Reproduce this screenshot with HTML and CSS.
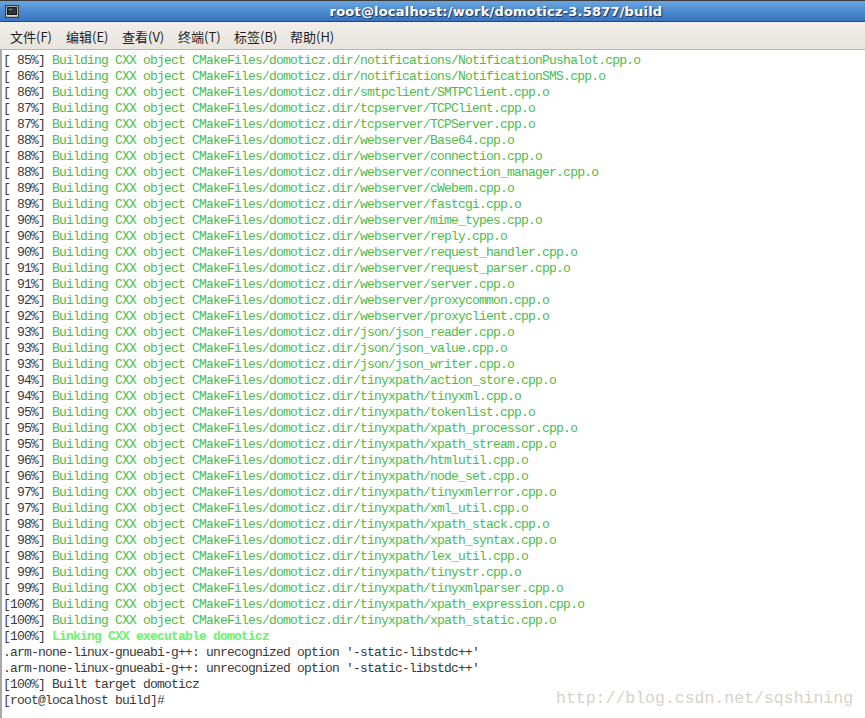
FILE: index.html
```html
<!DOCTYPE html>
<html>
<head>
<meta charset="utf-8">
<link rel="stylesheet" href="styles.css">
</head>
<body>
<div class="window">
  <div class="titlebar">
    <svg class="ticon" width="14" height="13" viewBox="0 0 14 13">
      <rect x="0.5" y="0.5" width="13" height="12" fill="#8a8a86" stroke="#3a3a3a"/>
      <rect x="1.5" y="1.5" width="11" height="10" fill="#d8d8d2"/>
      <rect x="2.5" y="2.5" width="9" height="7" fill="#2e3436" stroke="#1a1a1a"/>
      <rect x="4" y="4" width="3" height="1" fill="#8fa08f"/>
    </svg>
    <div class="title">root@localhost:/work/domoticz-3.5877/build</div>
  </div>
  <div class="menubar">
    <span class="mi">文件(F)</span>
    <span class="mi">编辑(E)</span>
    <span class="mi">查看(V)</span>
    <span class="mi">终端(T)</span>
    <span class="mi">标签(B)</span>
    <span class="mi">帮助(H)</span>
  </div>
  <div class="term">
<pre class="out"><span class="k">[ 85%]</span> <span class="g">Building CXX object CMakeFiles/domoticz.dir/notifications/NotificationPushalot.cpp.o</span>
<span class="k">[ 86%]</span> <span class="g">Building CXX object CMakeFiles/domoticz.dir/notifications/NotificationSMS.cpp.o</span>
<span class="k">[ 86%]</span> <span class="g">Building CXX object CMakeFiles/domoticz.dir/smtpclient/SMTPClient.cpp.o</span>
<span class="k">[ 87%]</span> <span class="g">Building CXX object CMakeFiles/domoticz.dir/tcpserver/TCPClient.cpp.o</span>
<span class="k">[ 87%]</span> <span class="g">Building CXX object CMakeFiles/domoticz.dir/tcpserver/TCPServer.cpp.o</span>
<span class="k">[ 88%]</span> <span class="g">Building CXX object CMakeFiles/domoticz.dir/webserver/Base64.cpp.o</span>
<span class="k">[ 88%]</span> <span class="g">Building CXX object CMakeFiles/domoticz.dir/webserver/connection.cpp.o</span>
<span class="k">[ 88%]</span> <span class="g">Building CXX object CMakeFiles/domoticz.dir/webserver/connection_manager.cpp.o</span>
<span class="k">[ 89%]</span> <span class="g">Building CXX object CMakeFiles/domoticz.dir/webserver/cWebem.cpp.o</span>
<span class="k">[ 89%]</span> <span class="g">Building CXX object CMakeFiles/domoticz.dir/webserver/fastcgi.cpp.o</span>
<span class="k">[ 90%]</span> <span class="g">Building CXX object CMakeFiles/domoticz.dir/webserver/mime_types.cpp.o</span>
<span class="k">[ 90%]</span> <span class="g">Building CXX object CMakeFiles/domoticz.dir/webserver/reply.cpp.o</span>
<span class="k">[ 90%]</span> <span class="g">Building CXX object CMakeFiles/domoticz.dir/webserver/request_handler.cpp.o</span>
<span class="k">[ 91%]</span> <span class="g">Building CXX object CMakeFiles/domoticz.dir/webserver/request_parser.cpp.o</span>
<span class="k">[ 91%]</span> <span class="g">Building CXX object CMakeFiles/domoticz.dir/webserver/server.cpp.o</span>
<span class="k">[ 92%]</span> <span class="g">Building CXX object CMakeFiles/domoticz.dir/webserver/proxycommon.cpp.o</span>
<span class="k">[ 92%]</span> <span class="g">Building CXX object CMakeFiles/domoticz.dir/webserver/proxyclient.cpp.o</span>
<span class="k">[ 93%]</span> <span class="g">Building CXX object CMakeFiles/domoticz.dir/json/json_reader.cpp.o</span>
<span class="k">[ 93%]</span> <span class="g">Building CXX object CMakeFiles/domoticz.dir/json/json_value.cpp.o</span>
<span class="k">[ 93%]</span> <span class="g">Building CXX object CMakeFiles/domoticz.dir/json/json_writer.cpp.o</span>
<span class="k">[ 94%]</span> <span class="g">Building CXX object CMakeFiles/domoticz.dir/tinyxpath/action_store.cpp.o</span>
<span class="k">[ 94%]</span> <span class="g">Building CXX object CMakeFiles/domoticz.dir/tinyxpath/tinyxml.cpp.o</span>
<span class="k">[ 95%]</span> <span class="g">Building CXX object CMakeFiles/domoticz.dir/tinyxpath/tokenlist.cpp.o</span>
<span class="k">[ 95%]</span> <span class="g">Building CXX object CMakeFiles/domoticz.dir/tinyxpath/xpath_processor.cpp.o</span>
<span class="k">[ 95%]</span> <span class="g">Building CXX object CMakeFiles/domoticz.dir/tinyxpath/xpath_stream.cpp.o</span>
<span class="k">[ 96%]</span> <span class="g">Building CXX object CMakeFiles/domoticz.dir/tinyxpath/htmlutil.cpp.o</span>
<span class="k">[ 96%]</span> <span class="g">Building CXX object CMakeFiles/domoticz.dir/tinyxpath/node_set.cpp.o</span>
<span class="k">[ 97%]</span> <span class="g">Building CXX object CMakeFiles/domoticz.dir/tinyxpath/tinyxmlerror.cpp.o</span>
<span class="k">[ 97%]</span> <span class="g">Building CXX object CMakeFiles/domoticz.dir/tinyxpath/xml_util.cpp.o</span>
<span class="k">[ 98%]</span> <span class="g">Building CXX object CMakeFiles/domoticz.dir/tinyxpath/xpath_stack.cpp.o</span>
<span class="k">[ 98%]</span> <span class="g">Building CXX object CMakeFiles/domoticz.dir/tinyxpath/xpath_syntax.cpp.o</span>
<span class="k">[ 98%]</span> <span class="g">Building CXX object CMakeFiles/domoticz.dir/tinyxpath/lex_util.cpp.o</span>
<span class="k">[ 99%]</span> <span class="g">Building CXX object CMakeFiles/domoticz.dir/tinyxpath/tinystr.cpp.o</span>
<span class="k">[ 99%]</span> <span class="g">Building CXX object CMakeFiles/domoticz.dir/tinyxpath/tinyxmlparser.cpp.o</span>
<span class="k">[100%]</span> <span class="g">Building CXX object CMakeFiles/domoticz.dir/tinyxpath/xpath_expression.cpp.o</span>
<span class="k">[100%]</span> <span class="g">Building CXX object CMakeFiles/domoticz.dir/tinyxpath/xpath_static.cpp.o</span>
<span class="k">[100%]</span> <span class="lg">Linking CXX executable domoticz</span>
<span class="k">.arm-none-linux-gnueabi-g++: unrecognized option '-static-libstdc++'</span>
<span class="k">.arm-none-linux-gnueabi-g++: unrecognized option '-static-libstdc++'</span>
<span class="k">[100%] Built target domoticz</span>
<span class="k">[root@localhost build]#</span></pre>
    <div class="wm">http://blog.csdn.net/sqshining</div>
  </div>
</div>
</body>
</html>
```

FILE: styles.css
```css
html, body {
  margin: 0;
  padding: 0;
  background: #ffffff;
}
.window {
  width: 865px;
  height: 718px;
  overflow: hidden;
  display: flex;
  flex-direction: column;
}
.titlebar {
  height: 22px;
  flex: none;
  box-sizing: border-box;
  border-top: 1px solid #3a3a3a;
  border-bottom: 1px solid #24487a;
  background: linear-gradient(#6aa6e0, #4c8ad0 50%, #3a74bc);
  display: flex;
  align-items: center;
  padding-left: 5px;
}
.ticon {
  display: block;
  flex: none;
}
.title {
  flex: 1;
  text-align: center;
  padding-left: 108px;
  font-family: "DejaVu Sans", sans-serif;
  font-weight: bold;
  font-size: 13px;
  color: #ffffff;
  text-shadow: 1px 1px 1px #1c3558;
  letter-spacing: 0.2px;
}
.menubar {
  height: 28px;
  flex: none;
  box-sizing: border-box;
  background: linear-gradient(#f1efeb, #e8e4de);
  border-bottom: 1px solid #bcb5a9;
  display: flex;
  align-items: center;
  gap: 14px;
  padding-left: 10px;
  padding-top: 2px;
}
.mi {
  font-family: "Noto Sans CJK SC", "Noto Sans", sans-serif;
  font-size: 13px;
  color: #1e1e1e;
  width: 42px;
  white-space: nowrap;
}
.term {
  flex: 1;
  position: relative;
  border-left: 2px solid #a8a8a8;
  background: #ffffff;
}
.out {
  margin: 0;
  padding: 3px 0 0 1px;
  font-family: "Liberation Mono", "DejaVu Sans Mono", monospace;
  font-size: 13px;
  letter-spacing: -0.8px;
  line-height: 16px;
  white-space: pre;
}
.k { color: #3a3a3a; }
.g { color: #4cbc4c; }
.lg { color: #6cf26c; font-weight: bold; }
.wm {
  position: absolute;
  left: 554px;
  top: 639px;
  font-family: "Liberation Mono", monospace;
  font-size: 16.5px;
  color: #d6d2ca;
  white-space: nowrap;
}
```
